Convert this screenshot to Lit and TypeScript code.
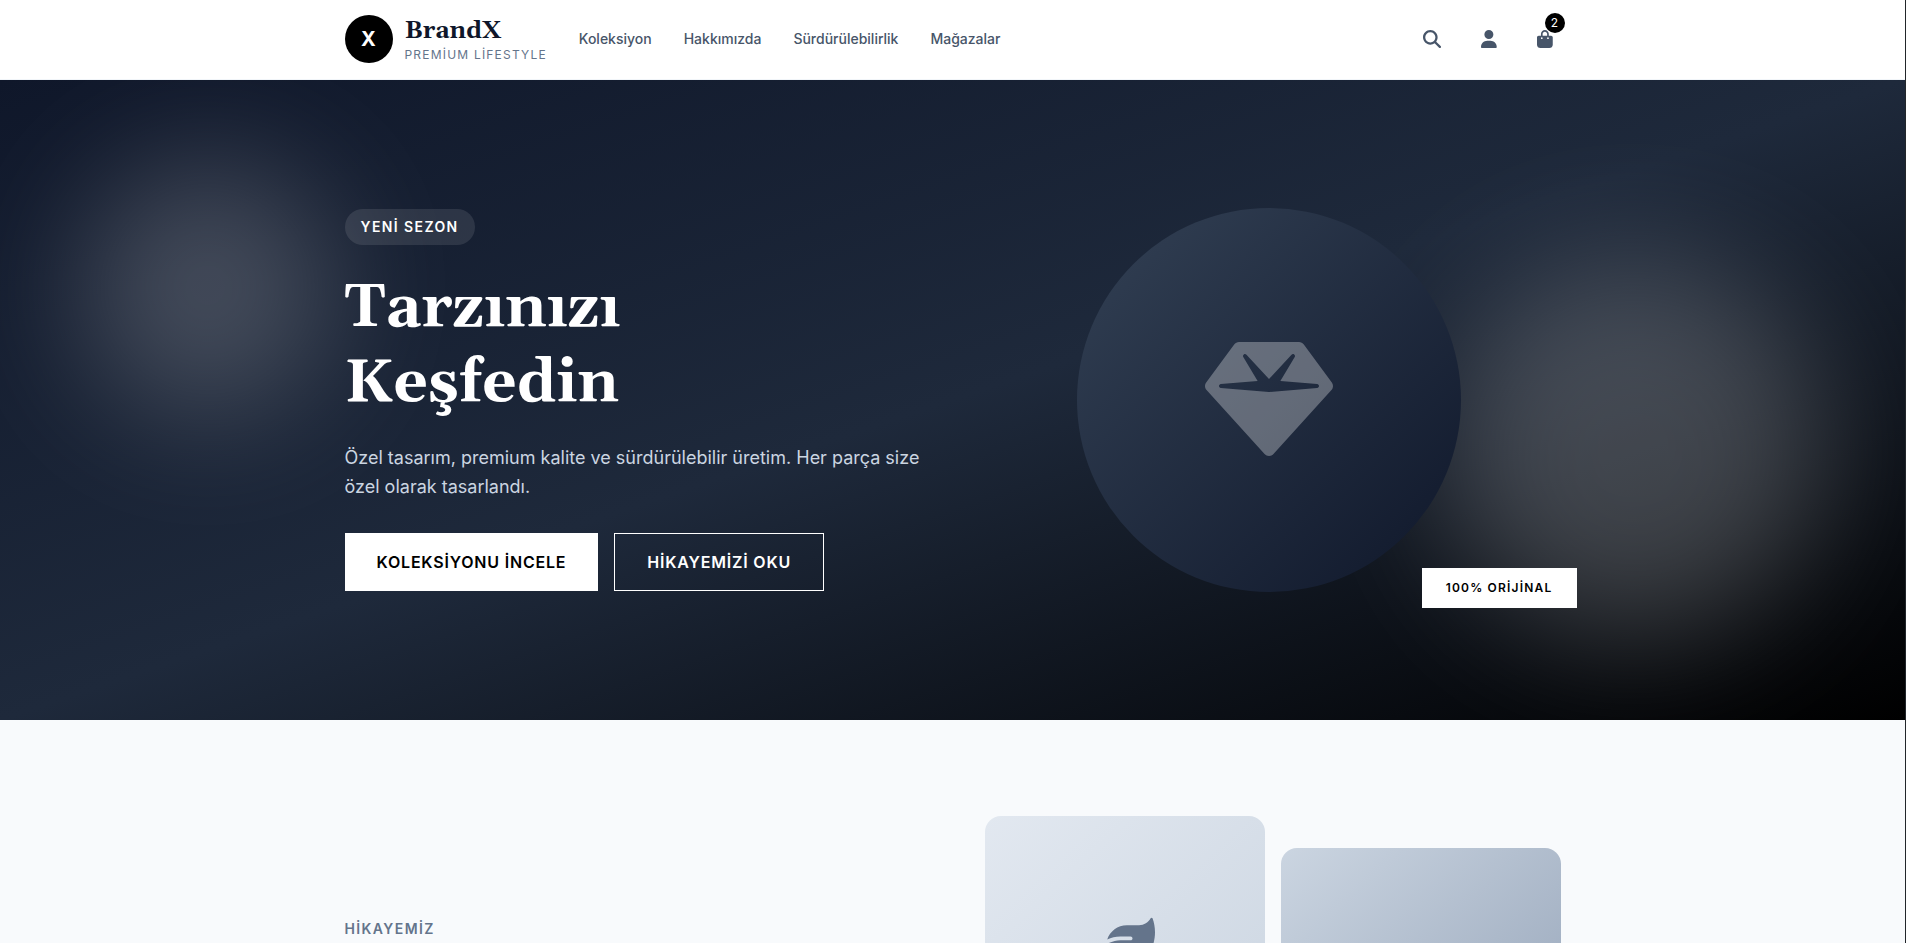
import { LitElement, html, css, svg } from "lit";
import { customElement, property } from "lit/decorators.js";

const ICONS: Record<string, { box: string; d: string }> = {
  search: {
    box: "0 0 512 512",
    d: "M416 208c0 45.9-14.9 88.3-40 122.7L502.6 457.4c12.5 12.5 12.5 32.8 0 45.3s-32.8 12.5-45.3 0L330.7 376c-34.4 25.2-76.8 40-122.7 40C93.1 416 0 322.9 0 208S93.1 0 208 0S416 93.1 416 208zM208 352a144 144 0 1 0 0-288 144 144 0 1 0 0 288z",
  },
  user: {
    box: "0 0 448 512",
    d: "M224 256A128 128 0 1 0 224 0a128 128 0 1 0 0 256zm-45.7 48C79.8 304 0 383.8 0 482.3C0 498.7 13.3 512 29.7 512H418.3c16.4 0 29.7-13.3 29.7-29.7C448 383.8 368.2 304 269.7 304H178.3z",
  },
  bag: {
    box: "0 0 448 512",
    d: "M160 112c0-35.3 28.7-64 64-64s64 28.7 64 64v48H160V112zm-48 48H48c-26.5 0-48 21.5-48 48V416c0 53 43 96 96 96H352c53 0 96-43 96-96V208c0-26.5-21.5-48-48-48H336V112C336 50.1 285.9 0 224 0S112 50.1 112 112v48zm24 48a24 24 0 1 1 0 48 24 24 0 1 1 0-48zm152 24a24 24 0 1 1 48 0 24 24 0 1 1 -48 0z",
  },
  gem: {
    box: "0 0 512 512",
    d: "M116.7 33.8c4.5-6.1 11.7-9.8 19.3-9.8H376c7.6 0 14.8 3.6 19.3 9.8l112 152c6.8 9.2 6.1 21.9-1.5 30.4l-232 256c-4.5 5-11 7.9-17.8 7.9s-13.2-2.9-17.8-7.9l-232-256c-7.7-8.5-8.3-21.2-1.5-30.4l112-152zm38.5 39.8c-3.3 2.5-4.2 7-2.1 10.5l57.4 95.6L63.3 192c-4.1 .3-7.3 3.8-7.3 8s3.2 7.6 7.3 8l192 16c.4 0 .9 0 1.3 0l192-16c4.1-.3 7.3-3.8 7.3-8s-3.2-7.6-7.3-8L301.5 179.8l57.4-95.6c2.1-3.5 1.2-8.1-2.1-10.5s-7.9-2-10.7 1L256 172.2 165.9 74.6c-2.8-3-7.4-3.4-10.7-1z",
  },
  leaf: {
    box: "0 0 512 512",
    d: "M272 96c-78.6 0-145.1 51.5-167.7 122.5c33.6-17 71.5-26.5 111.7-26.5h88c8.8 0 16 7.2 16 16s-7.2 16-16 16H288 216s0 0 0 0c-16.6 0-32.7 1.9-48.3 5.4c-25.9 5.9-49.9 16.4-71.4 30.7c0 0 0 0 0 0C38.3 298.8 0 364.9 0 440v16c0 13.3 10.7 24 24 24s24-10.7 24-24V440c0-48.7 20.7-92.5 53.8-123.2C121.6 392.3 190.3 448 272 448l1 0c132.1-.7 239-130.9 239-291.4c0-42.6-7.5-83.1-21.1-119.6c-2.6-6.9-12.7-6.6-16.2-.1C455.9 72.1 418.7 96 376 96L272 96z",
  },
};

@customElement("brand-icon")
class BrandIcon extends LitElement {
  @property() name = "search";

  static styles = css`
    :host {
      display: inline-flex;
    }
    .glyph {
      height: 1em;
      width: auto;
      fill: currentColor;
    }
  `;

  render() {
    const icon = ICONS[this.name];
    return html`<svg class="glyph" viewBox=${icon.box} aria-hidden="true">
      ${svg`<path d=${icon.d}></path>`}
    </svg>`;
  }
}

@customElement("brand-header")
class BrandHeader extends LitElement {
  @property({ type: Number }) cartCount = 2;

  static styles = css`
    :host {
      display: block;
      background: #fff;
      border-bottom: 1px solid #f1f5f9;
    }
    .bar {
      display: flex;
      align-items: center;
      justify-content: space-between;
      box-sizing: border-box;
      max-width: 1280px;
      margin: 0 auto;
      padding: 15px 32px 16px;
    }
    .left,
    .logo,
    .nav,
    .actions {
      display: flex;
      align-items: center;
    }
    .left,
    .nav {
      gap: 32px;
    }
    .logo {
      gap: 12px;
      text-decoration: none;
    }
    .mark {
      display: flex;
      align-items: center;
      justify-content: center;
      width: 48px;
      height: 48px;
      border-radius: 50%;
      background: #000;
      color: #fff;
      font-size: 20px;
      font-weight: 700;
    }
    .name {
      display: block;
      font-family: Georgia, Gelasio, "Liberation Serif", serif;
      font-size: 24px;
      line-height: 32px;
      font-weight: 700;
      color: #0f172a;
    }
    .tag {
      display: block;
      font-size: 12px;
      line-height: 16px;
      letter-spacing: 1.2px;
      color: #64748b;
    }
    .link {
      font-size: 14px;
      line-height: 20px;
      font-weight: 500;
      color: #475569;
      text-decoration: none;
    }
    .actions {
      gap: 24px;
    }
    .action {
      position: relative;
      display: flex;
      align-items: center;
      height: 44px;
      padding: 0 8px;
      border: 0;
      background: none;
      color: #475569;
      font: inherit;
      font-size: 18px;
      cursor: pointer;
    }
    .count {
      position: absolute;
      top: -4px;
      right: -4px;
      width: 20px;
      height: 20px;
      border-radius: 50%;
      background: #000;
      color: #fff;
      font-size: 12px;
      line-height: 20px;
      text-align: center;
    }
  `;

  render() {
    const links = ["Koleksiyon", "Hakkımızda", "Sürdürülebilirlik", "Mağazalar"];
    return html`
      <header class="bar">
        <div class="left">
          <a class="logo" href="#">
            <span class="mark">X</span>
            <span>
              <span class="name">BrandX</span>
              <span class="tag">PREMİUM LİFESTYLE</span>
            </span>
          </a>
          <nav class="nav">
            ${links.map((l) => html`<a class="link" href="#">${l}</a>`)}
          </nav>
        </div>
        <div class="actions">
          <button class="action" aria-label="Ara"><brand-icon name="search"></brand-icon></button>
          <button class="action" aria-label="Hesap"><brand-icon name="user"></brand-icon></button>
          <button class="action" aria-label="Sepet">
            <brand-icon name="bag"></brand-icon><span class="count">${this.cartCount}</span>
          </button>
        </div>
      </header>
    `;
  }
}

@customElement("brand-hero")
class BrandHero extends LitElement {
  static styles = css`
    :host {
      position: relative;
      display: block;
      overflow: hidden;
      background: linear-gradient(to bottom right, #0f172a, #1e293b, #000);
      color: #fff;
    }
    .glow {
      position: absolute;
      border-radius: 50%;
      background: #fff;
      opacity: 0.2;
      filter: blur(64px);
    }
    .glow.start {
      top: 80px;
      left: 80px;
      width: 256px;
      height: 256px;
    }
    .glow.end {
      right: 80px;
      bottom: 80px;
      width: 384px;
      height: 384px;
    }
    .inner {
      position: relative;
      display: grid;
      grid-template-columns: 1fr 1fr;
      align-items: center;
      gap: 48px;
      box-sizing: border-box;
      max-width: 1280px;
      margin: 0 auto;
      padding: 128px 32px;
    }
    .pill {
      display: inline-block;
      padding: 8px 16px;
      border-radius: 18px;
      background: rgba(255, 255, 255, 0.1);
      font-size: 14px;
      line-height: 20px;
      font-weight: 600;
      letter-spacing: 1.4px;
      vertical-align: top;
    }
    .title {
      margin: 26px 0 22px;
      font-family: Georgia, Gelasio, "Liberation Serif", serif;
      font-size: 60px;
      line-height: 75px;
      font-weight: 700;
    }
    .lead {
      margin: 0 0 32px;
      font-size: 18px;
      line-height: 29px;
      color: #cbd5e1;
    }
    .buttons {
      display: flex;
      gap: 16px;
    }
    .cta {
      padding: 16px 32px;
      border: 1px solid #fff;
      background: transparent;
      color: #fff;
      font: inherit;
      font-size: 16px;
      line-height: 24px;
      font-weight: 600;
      letter-spacing: 0.8px;
      cursor: pointer;
    }
    .cta.solid {
      border: 0;
      background: #fff;
      color: #000;
    }
    .visual {
      position: relative;
      display: flex;
      justify-content: center;
    }
    .disc {
      display: flex;
      align-items: center;
      justify-content: center;
      width: 384px;
      height: 384px;
      border-radius: 50%;
      background: linear-gradient(to bottom right, #334155, #0f172a);
      font-size: 128px;
      color: rgba(255, 255, 255, 0.3);
    }
    .stamp {
      position: absolute;
      right: -16px;
      bottom: -16px;
      padding: 12px 24px;
      background: #fff;
      color: #000;
      font-size: 12px;
      line-height: 16px;
      font-weight: 600;
      letter-spacing: 1.2px;
    }
  `;

  render() {
    return html`
      <div class="glow start"></div>
      <div class="glow end"></div>
      <section class="inner">
        <div>
          <span class="pill">YENİ SEZON</span>
          <h1 class="title">Tarzınızı<br />Keşfedin</h1>
          <p class="lead">
            Özel tasarım, premium kalite ve sürdürülebilir üretim. Her parça size özel olarak
            tasarlandı.
          </p>
          <div class="buttons">
            <button class="cta solid">KOLEKSİYONU İNCELE</button>
            <button class="cta">HİKAYEMİZİ OKU</button>
          </div>
        </div>
        <div class="visual">
          <div class="disc"><brand-icon name="gem"></brand-icon></div>
          <div class="stamp">100% ORİJİNAL</div>
        </div>
      </section>
    `;
  }
}

@customElement("brand-story")
class BrandStory extends LitElement {
  static styles = css`
    :host {
      display: block;
      background: #f8fafc;
    }
    .inner {
      display: grid;
      grid-template-columns: 1fr 1fr;
      gap: 64px;
      box-sizing: border-box;
      max-width: 1280px;
      margin: 0 auto;
      padding: 96px 32px;
    }
    .label {
      margin: 0;
      padding-top: 103px;
      font-size: 14px;
      line-height: 20px;
      font-weight: 600;
      letter-spacing: 1.4px;
      color: #64748b;
    }
    .cards {
      display: grid;
      grid-template-columns: 1fr 1fr;
      align-items: start;
      gap: 16px;
    }
    .card {
      display: flex;
      align-items: center;
      justify-content: center;
      height: 256px;
      border-radius: 16px;
      background: linear-gradient(to bottom right, #e2e8f0, #cbd5e1);
      font-size: 60px;
      color: #64748b;
    }
    .card.lower {
      margin-top: 32px;
      background: linear-gradient(to bottom right, #cbd5e1, #94a3b8);
    }
  `;

  render() {
    return html`
      <section class="inner">
        <h2 class="label">HİKAYEMİZ</h2>
        <div class="cards">
          <div class="card"><brand-icon name="leaf"></brand-icon></div>
          <div class="card lower"></div>
        </div>
      </section>
    `;
  }
}

@customElement("app-root")
class AppRoot extends LitElement {
  static styles = css`
    :host {
      display: flex;
      flex-direction: column;
      box-sizing: border-box;
      height: 100vh;
      overflow: hidden;
      border-right: 1px solid #22262a;
      font-family: Inter, "Liberation Sans", sans-serif;
    }
    .fixed {
      flex: none;
    }
    .rest {
      flex: 1;
      min-height: 0;
      overflow: hidden;
    }
  `;

  render() {
    return html`
      <brand-header class="fixed"></brand-header>
      <brand-hero class="fixed"></brand-hero>
      <brand-story class="rest"></brand-story>
    `;
  }
}
